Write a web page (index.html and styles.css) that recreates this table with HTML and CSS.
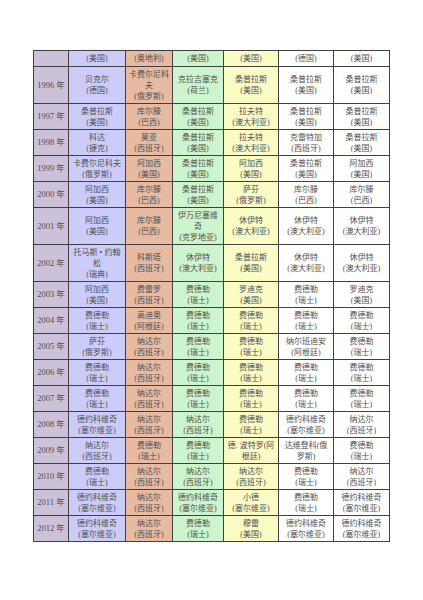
FILE: index.html
```html
<!DOCTYPE html>
<html lang="zh-CN">
<head>
<meta charset="utf-8">
<title>网球大满贯冠军</title>
<link rel="stylesheet" href="styles.css">
</head>
<body>
<div class="page">
<table class="results">
<colgroup>
<col class="c-year"><col class="c-au"><col class="c-fr"><col class="c-wb"><col class="c-us"><col class="c-x1"><col class="c-x2">
</colgroup>
<tbody>
<tr class="head"><td></td><td>(美国)</td><td>(奥地利)</td><td>(美国)</td><td>(美国)</td><td>(德国)</td><td>(美国)</td></tr>
<tr><td>1996 年</td><td>贝克尔<br>(德国)</td><td>卡费尔尼科<br>夫<br>(俄罗斯)</td><td>克拉吉塞克<br>(荷兰)</td><td>桑普拉斯<br>(美国)</td><td>桑普拉斯<br>(美国)</td><td>桑普拉斯<br>(美国)</td></tr>
<tr><td>1997 年</td><td>桑普拉斯<br>(美国)</td><td>库尔滕<br>(巴西)</td><td>桑普拉斯<br>(美国)</td><td>拉夫特<br>(澳大利亚)</td><td>桑普拉斯<br>(美国)</td><td>桑普拉斯<br>(美国)</td></tr>
<tr><td>1998 年</td><td>科达<br>(捷克)</td><td>莫亚<br>(西班牙)</td><td>桑普拉斯<br>(美国)</td><td>拉夫特<br>(澳大利亚)</td><td>克雷特加<br>(西班牙)</td><td>桑普拉斯<br>(美国)</td></tr>
<tr><td>1999 年</td><td>卡费尔尼科夫<br>(俄罗斯)</td><td>阿加西<br>(美国)</td><td>桑普拉斯<br>(美国)</td><td>阿加西<br>(美国)</td><td>桑普拉斯<br>(美国)</td><td>阿加西<br>(美国)</td></tr>
<tr><td>2000 年</td><td>阿加西<br>(美国)</td><td>库尔滕<br>(巴西)</td><td>桑普拉斯<br>(美国)</td><td>萨芬<br>(俄罗斯)</td><td>库尔滕<br>(巴西)</td><td>库尔滕<br>(巴西)</td></tr>
<tr><td>2001 年</td><td>阿加西<br>(美国)</td><td>库尔滕<br>(巴西)</td><td>伊万尼塞维<br>奇<br>(克罗地亚)</td><td>休伊特<br>(澳大利亚)</td><td>休伊特<br>(澳大利亚)</td><td>休伊特<br>(澳大利亚)</td></tr>
<tr><td>2002 年</td><td>托马斯 • 约翰<br>松<br>(瑞典)</td><td>科斯塔<br>(西班牙)</td><td>休伊特<br>(澳大利亚)</td><td>桑普拉斯<br>(美国)</td><td>休伊特<br>(澳大利亚)</td><td>休伊特<br>(澳大利亚)</td></tr>
<tr><td>2003 年</td><td>阿加西<br>(美国)</td><td>费雷罗<br>(西班牙)</td><td>费德勒<br>(瑞士)</td><td>罗迪克<br>(美国)</td><td>费德勒<br>(瑞士)</td><td>罗迪克<br>(美国)</td></tr>
<tr><td>2004 年</td><td>费德勒<br>(瑞士)</td><td>高迪奥<br>(阿根廷)</td><td>费德勒<br>(瑞士)</td><td>费德勒<br>(瑞士)</td><td>费德勒<br>(瑞士)</td><td>费德勒<br>(瑞士)</td></tr>
<tr><td>2005 年</td><td>萨芬<br>(俄罗斯)</td><td>纳达尔<br>(西班牙)</td><td>费德勒<br>(瑞士)</td><td>费德勒<br>(瑞士)</td><td>纳尔班迪安<br>(阿根廷)</td><td>费德勒<br>(瑞士)</td></tr>
<tr><td>2006 年</td><td>费德勒<br>(瑞士)</td><td>纳达尔<br>(西班牙)</td><td>费德勒<br>(瑞士)</td><td>费德勒<br>(瑞士)</td><td>费德勒<br>(瑞士)</td><td>费德勒<br>(瑞士)</td></tr>
<tr><td>2007 年</td><td>费德勒<br>(瑞士)</td><td>纳达尔<br>(西班牙)</td><td>费德勒<br>(瑞士)</td><td>费德勒<br>(瑞士)</td><td>费德勒<br>(瑞士)</td><td>费德勒<br>(瑞士)</td></tr>
<tr><td>2008 年</td><td>德约科维奇<br>(塞尔维亚)</td><td>纳达尔<br>(西班牙)</td><td>纳达尔<br>(西班牙)</td><td>费德勒<br>(瑞士)</td><td>德约科维奇<br>(塞尔维亚)</td><td>纳达尔<br>(西班牙)</td></tr>
<tr><td>2009 年</td><td>纳达尔<br>(西班牙)</td><td>费德勒<br>(瑞士)</td><td>费德勒<br>(瑞士)</td><td>德. 波特罗(阿<br>根廷)</td><td>达维登科(俄<br>罗斯)</td><td>费德勒<br>(瑞士)</td></tr>
<tr><td>2010 年</td><td>费德勒<br>(瑞士)</td><td>纳达尔<br>(西班牙)</td><td>纳达尔<br>(西班牙)</td><td>纳达尔<br>(西班牙)</td><td>费德勒<br>(瑞士)</td><td>纳达尔<br>(西班牙)</td></tr>
<tr><td>2011 年</td><td>德约科维奇<br>(塞尔维亚)</td><td>纳达尔<br>(西班牙)</td><td>德约科维奇<br>(塞尔维亚)</td><td>小德<br>(塞尔维亚)</td><td>费德勒<br>(瑞士)</td><td>德约科维奇<br>(塞尔维亚)</td></tr>
<tr><td>2012 年</td><td>德约科维奇<br>(塞尔维亚)</td><td>纳达尔<br>(西班牙)</td><td>费德勒<br>(瑞士)</td><td>穆雷<br>(美国)</td><td>德约科维奇<br>(塞尔维亚)</td><td>德约科维奇<br>(塞尔维亚)</td></tr>
</tbody>
</table>
</div>
</body>
</html>
```
FILE: styles.css
```css
html, body {
  margin: 0;
  padding: 0;
  background: #ffffff;
}

.page {
  padding: 50px 0 0 33px;
}

.results {
  border-collapse: collapse;
  table-layout: fixed;
  width: 356px;
  font-family: "Liberation Serif", "Noto Sans CJK SC", serif;
  font-size: 8px;
  line-height: 11px;
  color: #505050;
  font-weight: 400;
  border: 1.5px solid #3c3c3c;
}

.c-year { width: 35px; }
.c-au { width: 57px; }
.c-fr { width: 47px; }
.c-wb { width: 51px; }
.c-us { width: 55px; }
.c-x1 { width: 55px; }
.c-x2 { width: 56px; }

.results td {
  border: 1px solid #404040;
  padding: 1.5px 1px;
  text-align: center;
  vertical-align: middle;
  white-space: nowrap;
  overflow: hidden;
}

.results .head {
  height: 16px;
}

.results td:nth-child(1) {
  background: #cbc1d8;
  font-size: 8.5px;
  padding: 0;
}
.results td:nth-child(2) { background: #ccccfa; }
.results td:nth-child(3) { background: #e7baa2; }
.results td:nth-child(4) { background: #cdf5cd; }
.results td:nth-child(5) { background: #fbfbc6; }
.results td:nth-child(6),
.results td:nth-child(7) { background: #ffffff; }
```
